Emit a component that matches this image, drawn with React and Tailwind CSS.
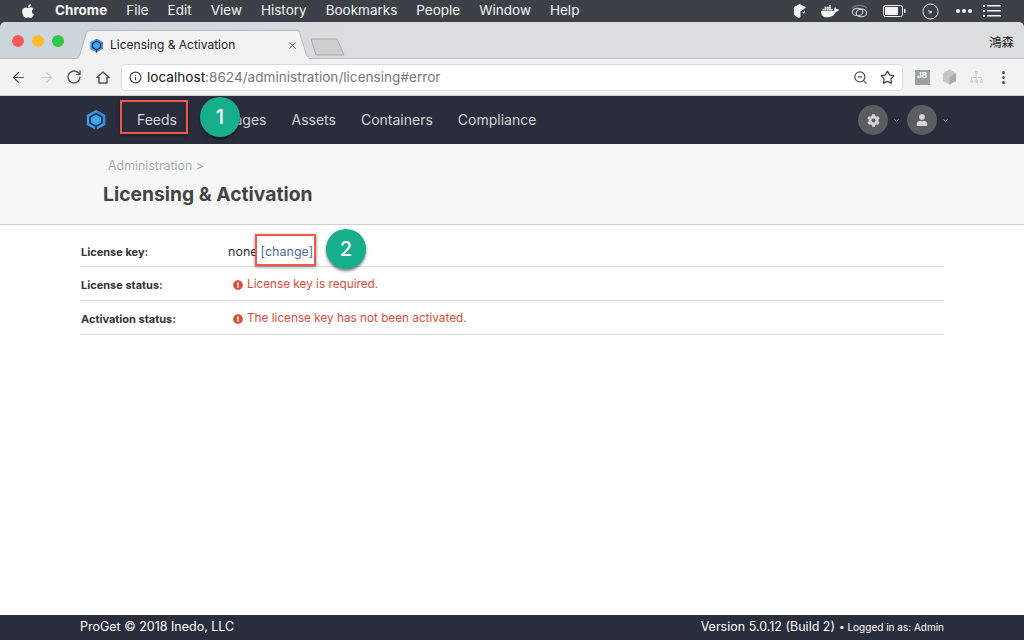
import { ArrowLeft, ArrowRight, RotateCw, Info, Star, ZoomOut, X, ChevronDown } from "lucide-react";
import { FaApple, FaDocker, FaCog, FaUser, FaExclamationCircle } from "react-icons/fa";

const menuItems = ["File", "Edit", "View", "History", "Bookmarks", "People", "Window", "Help"];
const navItems = ["Feeds", "Packages", "Assets", "Containers", "Compliance"];

function Logo({ size = 22 }) {
  return (
    <svg width={size} height={size} viewBox="0 0 24 24">
      <path d="M12 1 L22 6.500 L22 17.500 L12 23 L2 17.500 L2 6.500 Z" fill="#3c9cec" />
      <path d="M12 1 L22 6.500 L22 17.500 L18 15 L18 9 L12 5.500 Z" fill="#2f8ede" />
      <path d="M12 5 L18.500 8.700 L18.500 15.300 L12 19 L5.500 15.300 L5.500 8.700 Z" fill="none" stroke="#20304a" strokeWidth="1.800" />
      <path d="M12 19 V23" stroke="#20304a" strokeWidth="1.800" />
      <path d="M12 8.300 L15.700 10.400 L15.700 14 L12 16.100 L8.300 14 L8.300 10.400 Z" fill="#45a6f2" />
    </svg>
  );
}

function MenuBar() {
  return (
    <div className="h-[22px] bg-[#3c4147] flex items-center text-[#f4f4f4] text-[13.500px] leading-none">
      <FaApple size={16} className="ml-[20px] mr-[19px] text-[#f2f2f2]" />
      <span className="font-bold mr-[19px]">Chrome</span>
      <div className="flex gap-[19px]">
        {menuItems.map((m) => (
          <span key={m}>{m}</span>
        ))}
      </div>
      <div className="ml-auto flex items-center mr-[23px]">
        {/* status icons */}
        <svg width="14" height="16" viewBox="0 0 15 16" fill="#f4f4f4"><path d="M1 4 L7 0.500 L14 4 L10.500 7 L8 8.500 L8 14.500 L6 15.500 L1 12 Z" /><path d="M10 10 L13 8 L12 11 Z" /></svg>
        <FaDocker size={18} className="ml-[14px] text-[#f4f4f4]" />
        <svg width="17" height="15" viewBox="0 0 18 15" fill="none" stroke="#d5d5d5" strokeWidth="1.200" className="ml-[12px]"><ellipse cx="7" cy="8" rx="5.500" ry="4" /><ellipse cx="11" cy="9" rx="5.500" ry="4" /><path d="M1 4C5 0 13 0 17 4" stroke="#777" /></svg>
        <svg width="23" height="12" viewBox="0 0 23 12" className="ml-[15px]"><rect x="0.500" y="0.500" width="19" height="11" rx="2" fill="none" stroke="#f4f4f4" /><rect x="2" y="2" width="13" height="8" fill="#f4f4f4" /><rect x="21" y="4" width="1.500" height="4" fill="#f4f4f4" /></svg>
        <svg width="17" height="17" viewBox="0 0 18 18" fill="none" stroke="#f4f4f4" className="ml-[16px]"><circle cx="9" cy="9" r="8" /><path d="M6.500 8 L10.500 9.500 L7 11" /></svg>
        <div className="flex gap-[2px] ml-[17px]">
          <span className="w-[4px] h-[4px] rounded-full bg-[#f4f4f4]" />
          <span className="w-[4px] h-[4px] rounded-full bg-[#f4f4f4]" />
          <span className="w-[4px] h-[4px] rounded-full bg-[#f4f4f4]" />
        </div>
        <svg width="18" height="12" viewBox="0 0 18 12" fill="#f4f4f4" className="ml-[11px]"><path d="M0 0h2v2H0zM4 0h14v1.500H4zM0 5h2v2H0zM4 5h14v1.500H4zM0 10h2v2H0zM4 10h14v1.500H4z" /></svg>
      </div>
    </div>
  );
}

function TabStrip() {
  return (
    <div className="bg-[#3c4147]">
      <div className="h-[37px] bg-linear-to-r from-[#cdd5dc] from-10% to-[#dcdddf] to-35% border-b border-[#b9bbbd] relative rounded-t-[5px] text-[#222]">
        <div className="flex gap-[8px] absolute left-[12px] top-[13px]">
          <span className="w-[12px] h-[12px] rounded-full bg-[#fc5b57]" />
          <span className="w-[12px] h-[12px] rounded-full bg-[#fdbc2e]" />
          <span className="w-[12px] h-[12px] rounded-full bg-[#33c748]" />
        </div>
        <svg width="245" height="29" viewBox="0 0 245 29" className="absolute left-[73px] top-[8px]">
          <path d="M0 29 C5 29 6 27 7 24 L13 4 C14 1 15 0.500 18 0.500 H222 C225 0.500 226 1 227 4 L233 24 C234 27 236 29 241 29" fill="#f2f2f2" stroke="#b9bbbd" />
        </svg>
        <div className="absolute left-[89px] top-[15px] flex items-center h-[16px] w-[209px]">
          <Logo size={15} />
          <span className="ml-[6px] text-[12px]">Licensing &amp; Activation</span>
          <X size={11} strokeWidth={2} className="ml-auto text-[#444]" />
        </div>
        <svg width="36" height="18" viewBox="0 0 36 18" className="absolute left-[310px] top-[16px]">
          <path d="M1 1 H27 L34 17 H6 Z" fill="#cfcfcf" stroke="#a9a9a9" />
        </svg>
        <span className="absolute right-[10px] top-[11px] text-[12.500px] font-['Noto_Sans_CJK_TC',sans-serif]">鴻森</span>
      </div>
    </div>
  );
}

function Toolbar() {
  return (
    <div className="h-[37px] bg-[#f2f2f2] flex items-center text-[#555] border-b border-[#d0d0d0]">
      <ArrowLeft size={17} strokeWidth={1.700} className="ml-[10px]" />
      <ArrowRight size={17} strokeWidth={1.700} className="ml-[11px] text-[#c9c9c9]" />
      <RotateCw size={16} strokeWidth={1.900} className="ml-[11px]" />
      <svg width="14" height="13" viewBox="0 0 14 13" fill="none" stroke="#555" strokeWidth="1.500" className="ml-[14px]">
        <path d="M1 6.500 L7 1 L13 6.500 H11 V12 H3 V6.500 Z" strokeLinejoin="round" />
      </svg>
      <div className="ml-[11px] w-[782px] h-[27px] bg-white border border-[#dcdcdc] rounded-[4px] flex items-center px-[7px]">
        <Info size={13} className="text-[#333]" />
        <span className="ml-[5px] text-[13.600px] text-[#777]">
          <span className="text-[#111]">localhost</span>:8624/administration/licensing#error
        </span>
        <ZoomOut size={15} className="ml-auto text-[#555]" />
        <Star size={15} className="ml-[12px] text-[#444]" />
      </div>
      <div className="ml-[12px] w-[15px] h-[15px] bg-[#9ba0a5] text-white text-[8px] font-bold leading-[9px] pl-[2px] pt-[1px]">JB</div>
      <svg width="15" height="16" viewBox="0 0 15 16" className="ml-[12px]">
        <path d="M7.500 0.500 L14 4 V12 L7.500 15.500 L1 12 V4 Z" fill="#c5c7c8" />
        <path d="M7.500 8 L14 4 V12 L7.500 15.500 Z" fill="#a8abad" />
      </svg>
      <svg width="13" height="13" viewBox="0 0 13 13" className="ml-[13px]" fill="#d6d6d6">
        <path d="M5 0h3v3H5zM0 9h3v3H0zM5 9h3v3H5zM10 9h3v3h-3zM6 3h1v3h5v3h-1V7H7v2H6V7H2v2H1V6h5z" />
      </svg>
      <div className="ml-[19px] flex flex-col gap-[2px]">
        <span className="w-[3px] h-[3px] rounded-full bg-[#555]" />
        <span className="w-[3px] h-[3px] rounded-full bg-[#555]" />
        <span className="w-[3px] h-[3px] rounded-full bg-[#555]" />
      </div>
    </div>
  );
}

function NavBar() {
  return (
    <div className="h-[48px] bg-[#2a2d3c] flex items-center text-[#d4d4d6] text-[14px]">
      <div className="ml-[85px]"><Logo /></div>
      <div className="ml-[30px] pb-[1px] flex gap-[25px]">
        {navItems.map((n) => (
          <span key={n}>{n}</span>
        ))}
      </div>
      <div className="ml-auto mr-[75px] flex items-center">
        <div className="w-[30px] h-[30px] rounded-full bg-[#5c5d60] flex items-center justify-center">
          <FaCog size={13} className="text-[#d4d4d4]" />
        </div>
        <ChevronDown size={7} strokeWidth={3} className="ml-[5px] text-[#bbb]" />
        <div className="ml-[7px] w-[30px] h-[30px] rounded-full bg-[#5c5d60] flex items-center justify-center">
          <FaUser size={12} className="text-[#d4d4d4]" />
        </div>
        <ChevronDown size={7} strokeWidth={3} className="ml-[5px] text-[#bbb]" />
      </div>
    </div>
  );
}

function Row({ label, children, h }) {
  return (
    <div className={`flex items-center border-b border-[#dedede] ${h}`}>
      <div className="w-[148px] pl-[1px] text-[11px] font-bold text-[#333]">{label}</div>
      {children}
    </div>
  );
}

function ErrorText({ children }) {
  return (
    <div className="flex items-center text-[11.750px] text-[#dd4b39] ml-[5px]">
      <FaExclamationCircle size={10} className="mr-[4px]" />
      {children}
    </div>
  );
}

export default function App() {
  return (
    <div className="relative w-[1024px] h-[640px] overflow-hidden bg-white flex flex-col font-['Inter',sans-serif]">
      <MenuBar />
      <TabStrip />
      <Toolbar />
      <NavBar />
      <div className="h-[81px] bg-[#f7f7f7] border-b border-[#cfcfcf] shrink-0">
        <div className="ml-[108px] mt-[14px] text-[12.400px] leading-[16px] text-[#a9adb3]">Administration &gt;</div>
        <h1 className="ml-[103px] mt-[7px] text-[19.300px] leading-[26px] font-bold text-[#444]">Licensing &amp; Activation</h1>
      </div>
      <div className="mx-[80px] flex-1">
        <Row label="License key:" h="h-[42px] pt-[14px]">
          <span className="text-[12.500px] text-[#333]">none</span>
          <span className="ml-[3px] text-[12.500px] text-[#4a6d9c]">[change]</span>
        </Row>
        <Row label="License status:" h="h-[34px] pt-[3px]">
          <ErrorText>License key is required.</ErrorText>
        </Row>
        <Row label="Activation status:" h="h-[34px] pt-[3px]">
          <ErrorText>The license key has not been activated.</ErrorText>
        </Row>
      </div>
      <div className="h-[25px] bg-[#2a2d3c] shrink-0 flex items-center px-[80px] text-white text-[12.500px]">
        <span>ProGet © 2018 Inedo, LLC</span>
        <span className="ml-auto">Version 5.0.12 (Build 2)</span>
        <span className="ml-[4px] text-[10px]">• Logged in as: Admin</span>
      </div>

      {/* annotations on top of the screenshot */}
      <div className="absolute left-[120px] top-[100px] w-[68px] h-[34px] border-2 border-[#f0584c] shadow-[0_1px_3px_rgba(0,0,0,0.5)]" />
      <div className="absolute left-[200px] top-[97px] w-[40px] h-[40px] rounded-full bg-[#17ae8c] shadow-[0_2px_3px_rgba(0,0,0,0.5)] flex items-center justify-center text-white text-[20px] font-medium">1</div>
      <div className="absolute left-[255px] top-[234px] w-[61px] h-[32px] border-2 border-[#f0584c] shadow-[0_1px_3px_rgba(0,0,0,0.5)]" />
      <div className="absolute left-[326px] top-[229px] w-[40px] h-[40px] rounded-full bg-[#17ae8c] shadow-[0_2px_3px_rgba(0,0,0,0.5)] flex items-center justify-center text-white text-[20px] font-medium">2</div>
    </div>
  );
}
